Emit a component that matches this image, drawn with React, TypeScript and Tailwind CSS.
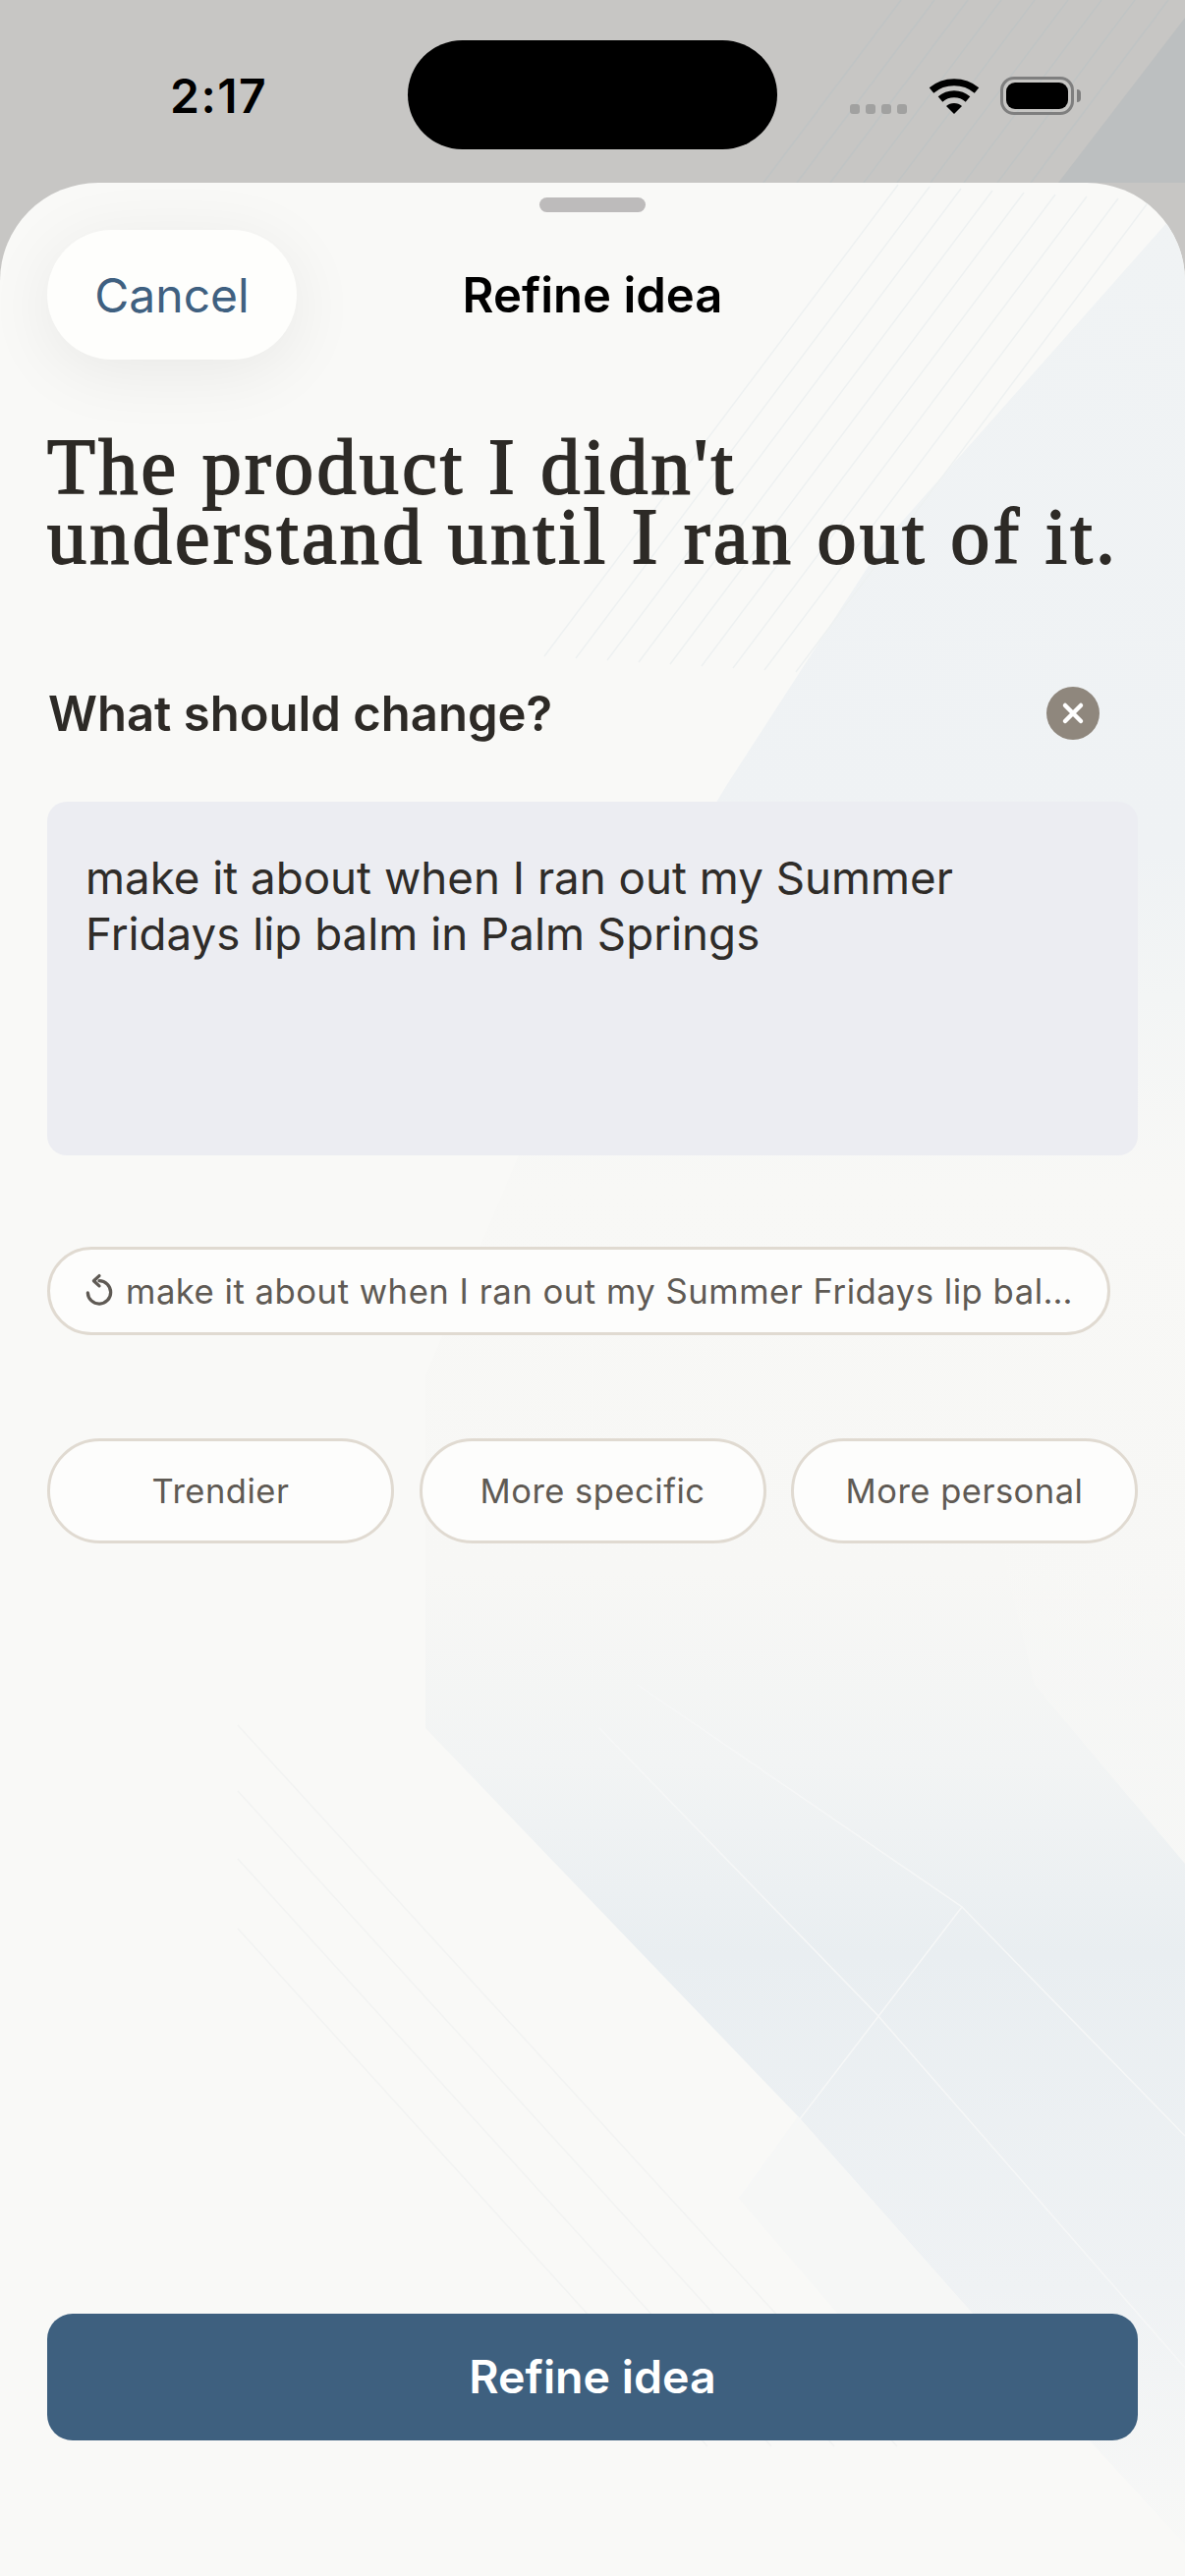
import React from "react";

const sans = "font-['Inter','Noto_Sans',sans-serif]";

function StatusArt() {
  const lines = [0, 1, 2, 3, 4, 5, 6, 7, 8];
  return (
    <svg className="absolute inset-0 h-full w-full" viewBox="0 0 1206 186" preserveAspectRatio="none">
      <polygon points="1206,18 1077,186 1206,186" fill="#bcbfc0" />
      {lines.map((i) => (
        <line key={i} x1={777 + i * 34} y1={186} x2={917 + i * 34} y2={0} stroke="#c0c4c4" strokeWidth="1.5" />
      ))}
    </svg>
  );
}

function SheetArt() {
  const top = [0, 1, 2, 3, 4, 5, 6, 7, 8];
  return (
    <svg className="absolute inset-0 h-full w-full" viewBox="0 186 1206 2436" preserveAspectRatio="none">
      <defs>
        <linearGradient id="band" x1="0" y1="186" x2="0" y2="2622" gradientUnits="userSpaceOnUse">
          <stop offset="0" stopColor="#f0f3f4" />
          <stop offset="0.28" stopColor="#eff2f4" />
          <stop offset="0.34" stopColor="#f3f5f5" />
          <stop offset="0.42" stopColor="#f8f8f6" />
          <stop offset="0.58" stopColor="#f7f7f5" />
          <stop offset="0.66" stopColor="#f2f4f4" />
          <stop offset="0.74" stopColor="#e9eef1" />
          <stop offset="0.88" stopColor="#eff2f4" />
          <stop offset="1" stopColor="#f9f9f7" />
        </linearGradient>
        <linearGradient id="light" x1="0" y1="1500" x2="0" y2="1900" gradientUnits="userSpaceOnUse">
          <stop offset="0" stopColor="#f8f8f6" stopOpacity="0" />
          <stop offset="1" stopColor="#f8f8f6" stopOpacity="0.9" />
        </linearGradient>
      </defs>
      <polygon
        points="1220,190 900,551 739,800 560,1100 433,1400 433,1759 812,2154 989,2354 1206,2590 1206,190"
        fill="url(#band)"
      />
      <polygon points="752,2238 812,2154 989,2354 1100,2480 960,2480" fill="#f6f7f6" />
      <polygon points="1053,1715 1206,1897 1206,1500 1000,1500" fill="url(#light)" />
      {top.map((i) => (
        <line
          key={i}
          x1={1170 - i * 32}
          y1={204 - i * 2}
          x2={810 - i * 32}
          y2={684 - i * 2}
          stroke="#eef1f1"
          strokeWidth="1.5"
        />
      ))}
      <g fill="none" stroke="#f6f7f7" strokeWidth="1.5">
        <polyline points="610,1759 893,2051 1206,2410" />
        <polyline points="649,1715 979,1941 752,2238" />
        <line x1="979" y1="1941" x2="1206" y2="2174" />
      </g>
      <g fill="none" stroke="#f2f3f2" strokeWidth="1.5">
        <line x1="242" y1="1756" x2="913" y2="2490" />
        <line x1="242" y1="1823" x2="849" y2="2490" />
        <line x1="242" y1="1892" x2="785" y2="2490" />
        <line x1="242" y1="1963" x2="720" y2="2490" />
      </g>
    </svg>
  );
}

function Wifi() {
  return (
    <svg width="52" height="39" viewBox="0 0 52 39" fill="none">
      <path d="M3 14 C 16 3, 36 3, 49 14" stroke="#000" strokeWidth="7" />
      <path d="M12 23 C 20 16, 32 16, 40 23" stroke="#000" strokeWidth="7" />
      <path d="M18 30 C 22 26, 30 26, 34 30 L26 38 Z" fill="#000" />
    </svg>
  );
}

function Battery() {
  return (
    <div className="flex items-center gap-[3px]">
      <div className="h-[39px] w-[75px] rounded-[14px] border-[3px] border-[#7f7f7f] p-[3px]">
        <div className="h-full w-full rounded-[9px] bg-black" />
      </div>
      <div className="h-[13px] w-[4px] rounded-r-full bg-[#7f7f7f]" />
    </div>
  );
}

function Chip({ label }: { label: string }) {
  return (
    <div className="flex h-[107px] w-[353px] items-center justify-center rounded-full border-[3px] border-[#e0dad1] bg-[#fdfdfc] text-[34.5px] tracking-[0.5px] text-[#5f5a54]">
      {label}
    </div>
  );
}

export default function App() {
  return (
    <div className={`relative isolate flex h-[2622px] w-[1206px] flex-col overflow-hidden bg-[#c7c6c4] ${sans}`}>
      {/* status bar */}
      <div className="relative h-[186px] shrink-0">
        <StatusArt />
        <div className="absolute left-[173px] top-[70px] text-[48px] font-semibold leading-[56px] tracking-[1.5px] text-black">2:17</div>
        <div className="absolute left-[415px] top-[41px] h-[111px] w-[376px] rounded-full bg-black" />
        <div className="absolute left-[865px] top-[106px] flex gap-[6px]">
          {[0, 1, 2, 3].map((i) => (
            <div key={i} className="h-[10px] w-[10px] rounded-[3px] bg-[#a1a1a0]" />
          ))}
        </div>
        <div className="absolute left-[945px] top-[78px]">
          <Wifi />
        </div>
        <div className="absolute left-[1018px] top-[78px]">
          <Battery />
        </div>
      </div>

      {/* sheet */}
      <div className="relative flex flex-1 flex-col overflow-hidden rounded-t-[100px] bg-[#f9f9f7] px-[48px]">
        <SheetArt />
        <div className="relative z-10 flex flex-1 flex-col">
          <div className="mt-[15px] h-[15px] w-[108px] self-center rounded-full bg-[#bdbbbb]" />
          <div className="mt-[18px] grid grid-cols-[1fr_auto_1fr] items-center">
            <div className="flex h-[132px] w-[254px] items-center justify-center rounded-full bg-[#fefefc] pt-[2px] text-[48px] text-[#3f6080] shadow-[0_12px_70px_rgba(0,0,0,0.07)]">
              Cancel
            </div>
            <div className="pt-[2px] text-[49px] font-semibold text-black">Refine idea</div>
            <div />
          </div>
          <h1 className="mt-[74px] font-['Liberation_Serif',serif] text-[80px] font-normal leading-[71px] tracking-[3.35px] text-[#2d2a26] [-webkit-text-stroke:1.8px_#2d2a26]">
            The product I didn't
            <br />
            understand until I ran out of it.
          </h1>
          <div className="mt-[117px] flex h-[54px] items-center justify-between pr-[39px]">
            <div className="pl-[1px] pt-[2px] text-[49px] font-semibold text-[#2d2a26]">What should change?</div>
            <div className="flex h-[54px] w-[54px] items-center justify-center rounded-full bg-[#8f877d]">
              <svg width="26" height="26" viewBox="0 0 26 26" fill="none" stroke="#fff" strokeWidth="4.5" strokeLinecap="round">
                <path d="M5 5 L21 21 M21 5 L5 21" />
              </svg>
            </div>
          </div>
          <div className="mt-[63px] h-[360px] rounded-[20px] bg-[#ecedf2] px-[39px] pt-[49px] text-[45.7px] leading-[57px] text-[#2f2c29]">
            make it about when I ran out my Summer
            <br />
            Fridays lip balm in Palm Springs
          </div>
          <div className="mt-[93px] flex h-[90px] w-[1082px] items-center gap-[13px] rounded-full border-[3px] border-[#e0dad1] bg-[#fdfdfc] pl-[36px] text-[34.7px] tracking-[0.5px] text-[#5f5a54]">
            <svg width="28" height="36" viewBox="0 0 30 36" fill="none" stroke="#5f5a54" strokeWidth="3.5" strokeLinecap="round" strokeLinejoin="round">
              <path d="M15 7 A12.5 12.5 0 1 1 2.5 20" />
              <path d="M15 1.5 L9 7 L15 12.5" />
            </svg>
            <span className="whitespace-nowrap">make it about when I ran out my Summer Fridays lip bal…</span>
          </div>
          <div className="mt-[105px] flex justify-between">
            <Chip label="Trendier" />
            <Chip label="More specific" />
            <Chip label="More personal" />
          </div>
          <div className="mb-[138px] mt-auto flex h-[129px] items-center justify-center rounded-[26px] bg-[#3e607f] text-[46.5px] font-semibold text-white">
            Refine idea
          </div>
        </div>
      </div>
    </div>
  );
}
